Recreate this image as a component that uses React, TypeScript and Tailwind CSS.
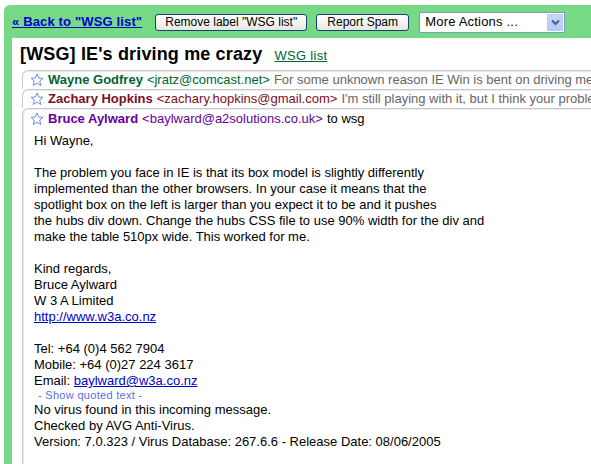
import React from "react";

function Star() {
  return (
    <svg width="14" height="14" viewBox="0 0 14 14" className="shrink-0">
      <path
        d="M7 1 L8.7 5 L13 5.3 L9.7 8.1 L10.8 12.5 L7 10.1 L3.2 12.5 L4.3 8.1 L1 5.3 L5.3 5 Z"
        fill="white"
        stroke="#6d8fe0"
        strokeWidth="1"
        strokeLinejoin="round"
      />
    </svg>
  );
}

function CollapsedRow({ name, email, color, snippet }: { name: string; email: string; color: string; snippet: string }) {
  return (
    <div className="flex items-center h-[19px] border-t border-[#c9c9c9] rounded-tl-[6px] border-l bg-white pl-[7px] gap-[4px] whitespace-nowrap overflow-hidden shadow-[inset_0_1px_0_#ececec]">
      <Star />
      <span className={`font-bold ${color}`}>{name}</span>
      <span className={color}>&lt;{email}&gt;</span>
      <span className="text-[#666]">{snippet}</span>
    </div>
  );
}

export default function App() {
  return (
    <div className="w-[591px] h-[464px] bg-white pt-[5px] pl-[4px] overflow-hidden font-['Liberation_Sans',Arial,sans-serif] text-[13px] text-black">
      <div className="bg-[#76d985] rounded-tl-[6px] pl-[8px] h-full">
        <div className="flex items-center h-[33px] pt-[1px]">
          <a href="#" className="text-[#0000cc] font-bold underline text-[13px] tracking-[0.15px]">
            « Back to "WSG list"
          </a>
          <button className="ml-[13px] h-[17px] w-[152px] rounded-[3px] border border-[#1c3f73] bg-gradient-to-b from-white to-[#e8e8e2] text-[12px] leading-none">
            Remove label "WSG list"
          </button>
          <button className="ml-[9px] h-[17px] w-[93px] rounded-[3px] border border-[#1c3f73] bg-gradient-to-b from-white to-[#e8e8e2] text-[12px] leading-none">
            Report Spam
          </button>
          <div className="ml-[10px] flex items-center h-[21px] w-[146px] border border-[#7f9db9] bg-white pl-[5px] pr-[1px]">
            <span className="flex-1 text-[13px] tracking-[0.2px]">More Actions ...</span>
            <span className="w-[16px] h-[17px] bg-gradient-to-b from-[#c6d6fb] to-[#b3c9f7] border border-[#b9cbf3] flex items-center justify-center">
              <svg width="9" height="7" viewBox="0 0 9 7">
                <path d="M1 1.5 L4.5 5 L8 1.5" fill="none" stroke="#4d6185" strokeWidth="2" />
              </svg>
            </span>
          </div>
        </div>
        <div className="bg-white h-full pl-[8px]">
          <div className="flex items-baseline h-[32px] pt-[3px] gap-[12px]">
            <span className="font-bold text-[18px] tracking-[0.15px]">[WSG] IE's driving me crazy</span>
            <a href="#" className="text-[#006633] underline text-[13px] tracking-[0.3px]">WSG list</a>
          </div>
          <div className="ml-[2px]">
            <CollapsedRow
              name="Wayne Godfrey"
              email="jratz@comcast.net"
              color="text-[#006633]"
              snippet="For some unknown reason IE Win is bent on driving me crazy"
            />
            <CollapsedRow
              name="Zachary Hopkins"
              email="zachary.hopkins@gmail.com"
              color="text-[#7a0f26]"
              snippet="I'm still playing with it, but I think your problem is"
            />
            <div className="border-t border-l border-[#c9c9c9] rounded-tl-[6px] shadow-[inset_1px_1px_0_#ececec] h-[400px]">
              <div className="flex items-center h-[19px] pl-[7px] gap-[4px] whitespace-nowrap">
                <Star />
                <span className="font-bold text-[#660099]">Bruce Aylward</span>
                <span className="text-[#660099]">&lt;baylward@a2solutions.co.uk&gt;</span>
                <span>to wsg</span>
              </div>
              <div className="pl-[11px] pt-[5px] leading-[16px]">
                <p>Hi Wayne,</p>
                <p className="mt-[16px]">
                  The problem you face in IE is that its box model is slightly differently
                  <br />
                  implemented than the other browsers. In your case it means that the
                  <br />
                  spotlight box on the left is larger than you expect it to be and it pushes
                  <br />
                  the hubs div down. Change the hubs CSS file to use 90% width for the div and
                  <br />
                  make the table 510px wide. This worked for me.
                </p>
                <p className="mt-[16px]">
                  Kind regards,
                  <br />
                  Bruce Aylward
                  <br />
                  W 3 A Limited
                  <br />
                  <a href="#" className="text-[#0000cc] underline">http://www.w3a.co.nz</a>
                </p>
                <p className="mt-[16px]">
                  Tel: +64 (0)4 562 7904
                  <br />
                  Mobile: +64 (0)27 224 3617
                  <br />
                  Email: <a href="#" className="text-[#0000cc] underline">baylward@w3a.co.nz</a>
                </p>
                <div className="text-[11px] leading-[13px] tracking-[0.3px] text-[#5a6ee0] pl-[4px]">- Show quoted text -</div>
                <p>
                  No virus found in this incoming message.
                  <br />
                  Checked by AVG Anti-Virus.
                  <br />
                  Version: 7.0.323 / Virus Database: 267.6.6 - Release Date: 08/06/2005
                </p>
              </div>
            </div>
          </div>
        </div>
      </div>
    </div>
  );
}
